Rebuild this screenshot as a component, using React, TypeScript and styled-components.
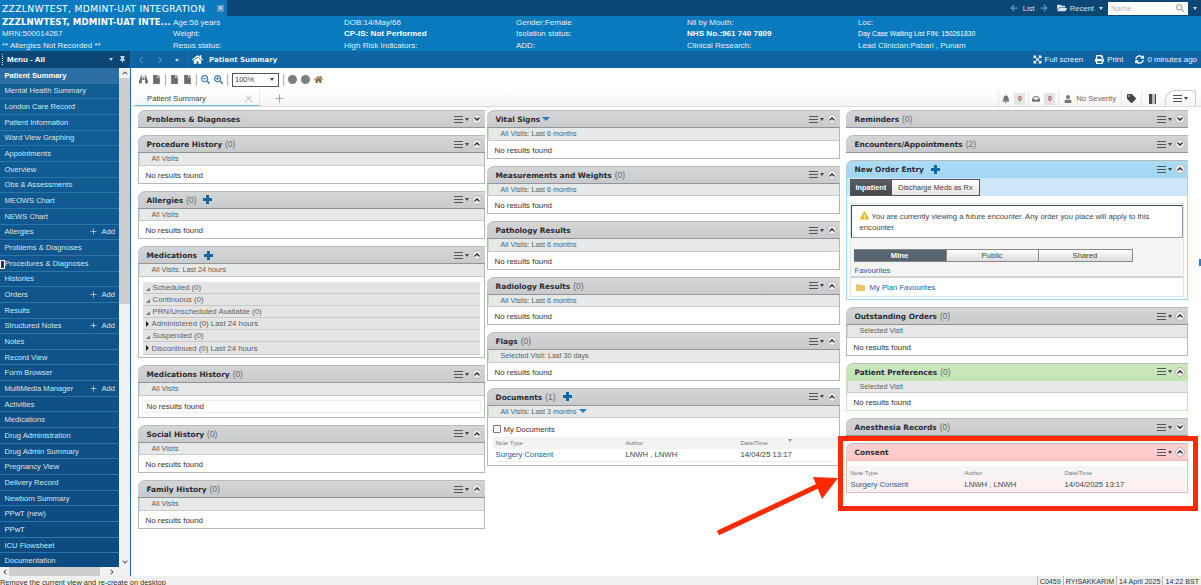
import React from 'react';
import styled, { createGlobalStyle } from 'styled-components';
import { Plus, X } from 'lucide-react';
import {
  FaBell,
  FaBinoculars,
  FaChevronDown,
  FaChevronLeft,
  FaChevronRight,
  FaChevronUp,
  FaFile,
  FaFolder,
  FaFolderOpen,
  FaHome,
  FaInbox,
  FaPrint,
  FaSearch,
  FaSearchMinus,
  FaSearchPlus,
  FaSyncAlt,
  FaTag,
  FaThumbtack,
  FaUser,
  FaExpandArrowsAlt,
  FaArrowLeft,
  FaArrowRight,
  FaExclamationTriangle,
} from 'react-icons/fa';

const FONT = '"Liberation Sans", "Noto Sans", sans-serif';
const HEAD_FONT = '"DejaVu Sans", "Liberation Sans", sans-serif';

const GlobalStyle = createGlobalStyle`
  html, body {
    margin: 0;
    padding: 0;
    height: 585px;
    overflow: hidden;
    background: #fff;
    font-family: ${FONT};
    font-size: 7.7px;
    color: #333;
  }
  * { box-sizing: border-box; }
`;

type Tone = 'grey' | 'blue' | 'green' | 'red';

const toneHeader: Record<Tone, string> = {
  grey: 'linear-gradient(#d3d5d6, #c8cacb)',
  blue: 'linear-gradient(#acdcf6, #a3d6f3)',
  green: 'linear-gradient(#cde8bf, #c3e3b2)',
  red: 'linear-gradient(#ffd0d0, #ffc9c9)',
};
const toneBorder: Record<Tone, string> = {
  grey: '#b5b8ba',
  blue: '#a3d6f3',
  green: '#c9e4ba',
  red: '#e8b9b9',
};

const menuItems: { label: string; add?: boolean }[] = [
  { label: 'Patient Summary' },
  { label: 'Mental Health Summary' },
  { label: 'London Care Record' },
  { label: 'Patient Information' },
  { label: 'Ward View Graphing' },
  { label: 'Appointments' },
  { label: 'Overview' },
  { label: 'Obs & Assessments' },
  { label: 'MEOWS Chart' },
  { label: 'NEWS Chart' },
  { label: 'Allergies', add: true },
  { label: 'Problems & Diagnoses' },
  { label: 'Procedures & Diagnoses' },
  { label: 'Histories' },
  { label: 'Orders', add: true },
  { label: 'Results' },
  { label: 'Structured Notes', add: true },
  { label: 'Notes' },
  { label: 'Record View' },
  { label: 'Form Browser' },
  { label: 'MultiMedia Manager', add: true },
  { label: 'Activities' },
  { label: 'Medications' },
  { label: 'Drug Administration' },
  { label: 'Drug Admin Summary' },
  { label: 'Pregnancy View' },
  { label: 'Delivery Record' },
  { label: 'Newborn Summary' },
  { label: 'PPwT (new)' },
  { label: 'PPwT' },
  { label: 'ICU Flowsheet' },
  { label: 'Documentation' },
];

const Page = styled.div`
  position: relative;
  width: 1201px;
  height: 585px;
  display: flex;
  flex-direction: column;
  overflow: hidden;
`;

const TopBar = styled.div`
  height: 16px;
  flex: none;
  background: #0c4674;
  display: flex;
  align-items: stretch;
  color: #cfe0ee;
`;

const PatientTab = styled.div`
  width: 227px;
  background: #0a7abf;
  color: #fff;
  font-family: ${HEAD_FONT};
  font-size: 9.2px;
  letter-spacing: 0.32px;
  display: flex;
  align-items: center;
  padding: 0 3px 0 2px;
  justify-content: space-between;
  white-space: nowrap;
`;

const TabClose = styled.span`
  width: 7px;
  height: 7px;
  background: #5d93b8;
  color: #fff;
  font-size: 7px;
  line-height: 7px;
  text-align: center;
`;

const TopTools = styled.div`
  margin-left: auto;
  display: flex;
  align-items: center;
  gap: 5px;
  padding-right: 4px;
  svg { color: #5d9cc9; font-size: 8px; }
`;

const RecentIcon = styled(FaFolderOpen)`
  && { color: #d5e3ee; font-size: 10px; }
  margin-left: 4px;
  margin-right: -2px;
`;

const NameBox = styled.div`
  width: 80px;
  height: 13px;
  background: #fff;
  color: #b5b5b5;
  display: flex;
  align-items: center;
  justify-content: space-between;
  padding: 0 4px 0 3px;
  svg { color: #aaa; }
`;

const Caret = styled.span`
  width: 0;
  height: 0;
  border: 2.5px solid transparent;
  border-top: 3px solid currentColor;
  border-bottom: 0;
  display: inline-block;
`;

const DarkCaret = styled(Caret)`
  color: #444;
`;

const Banner = styled.div`
  height: 35px;
  flex: none;
  background: #0a7abf;
  color: #e3eff7;
  display: grid;
  grid-template-columns: 171px 171px 172px 171px 171px 1fr;
  padding: 1px 0 0 2px;
  font-size: 8px;
`;

const BannerCol = styled.div`
  display: flex;
  flex-direction: column;
  white-space: nowrap;
  & > div { height: 11.4px; line-height: 11.4px; }
`;

const BannerName = styled.div`
  font-family: ${HEAD_FONT};
  font-weight: 700;
  color: #fff;
  font-size: 8.6px;
  letter-spacing: 0.1px;
`;

const StrongLine = styled.div`
  color: #fff;
  font-weight: 700;
  font-size: 8.1px;
`;

const SmallLine = styled.div`
  font-size: 6.8px;
  color: #fff;
`;

const Shell = styled.div`
  flex: 1;
  display: flex;
  min-height: 0;
`;

const Side = styled.aside`
  width: 130px;
  flex: none;
  display: flex;
  flex-direction: column;
`;

const MenuHead = styled.div`
  height: 17px;
  flex: none;
  background: #0c4674;
  color: #fff;
  display: flex;
  align-items: center;
  padding: 0 4px 0 7px;
  font-weight: 700;
  font-size: 8px;
  position: relative;
  svg { font-size: 7px; color: #c2d6e6; }
`;

const Grip = styled.span`
  position: absolute;
  left: 2px;
  top: 3px;
  height: 11px;
  border-left: 1.5px dotted #fff;
`;

const MenuTools = styled.div`
  margin-left: auto;
  display: flex;
  align-items: center;
  gap: 6px;
  color: #c2d6e6;
`;

const SideBody = styled.div`
  flex: 1;
  display: flex;
  min-height: 0;
`;

const MenuList = styled.ul`
  list-style: none;
  margin: 0;
  padding: 0;
  width: 119px;
  background: linear-gradient(#115f97, #0d4a80);
`;

const MenuItem = styled.li<{ $active?: boolean; $focus?: boolean }>`
  position: relative;
  height: 15.66px;
  display: flex;
  align-items: center;
  justify-content: space-between;
  padding: 0 4px 0 4.5px;
  color: ${(p) => (p.$active ? '#fff' : '#d6e5f0')};
  font-weight: ${(p) => (p.$active ? 700 : 400)};
  background: ${(p) => (p.$active ? '#2c6ea3' : 'transparent')};
  border-bottom: 1px solid #2a76aa;
  white-space: nowrap;
  font-size: 7.6px;
  ${(p) =>
    p.$focus &&
    `&::before {
      content: '';
      position: absolute;
      left: 0;
      top: 4px;
      width: 3px;
      height: 7px;
      border: 1px solid #fff;
      background: #123c78;
    }`}
`;

const AddLink = styled.span`
  display: flex;
  align-items: center;
  gap: 3px;
  svg { color: #fff; }
`;

const ScrollCol = styled.div`
  width: 11px;
  background: #f1f1f1;
  display: flex;
  flex-direction: column;
  align-items: center;
  color: #555;
  svg { font-size: 6px; }
`;

const ScrollThumb = styled.div`
  width: 100%;
  height: 226px;
  background: #cdcdcd;
`;

const ScrollArrow = styled.span<{ $bottom?: boolean }>`
  height: 10px;
  display: flex;
  align-items: center;
  margin-top: ${(p) => (p.$bottom ? 'auto' : '0')};
`;

const HScroll = styled.div`
  height: 9px;
  flex: none;
  background: #f1f1f1;
  display: flex;
  align-items: center;
  justify-content: space-between;
  padding: 0 15px 0 2px;
  color: #555;
  position: relative;
  svg { font-size: 6px; display: block; }
`;

const HThumb = styled.div`
  position: absolute;
  left: 9px;
  top: 0;
  width: 91px;
  height: 100%;
  background: #cdcdcd;
`;

const Main = styled.main`
  flex: 1;
  min-width: 0;
  display: flex;
  flex-direction: column;
  border-left: 1.5px solid #1a6aa5;
`;

const CrumbBar = styled.div`
  height: 17px;
  flex: none;
  background: #0f64a3;
  color: #e7f0f7;
  display: flex;
  align-items: center;
  padding: 0 4px 0 6px;
  font-size: 7.9px;
`;

const CrumbNav = styled.div`
  display: flex;
  align-items: center;
  gap: 11px;
  color: #4f8dbc;
  width: 51px;
  svg { font-size: 8px; display: block; }
  span:last-child { color: #c5d9e8; }
`;

const CrumbTitle = styled.div`
  display: flex;
  align-items: center;
  gap: 6px;
  font-weight: 700;
  font-family: ${HEAD_FONT};
  font-size: 7px;
  svg { font-size: 11px; color: #fff; }
  padding-left: 3px;
  border-left: 1px solid #1d73b0;
  height: 100%;
`;

const CrumbTools = styled.div`
  margin-left: auto;
  display: flex;
  align-items: center;
  gap: 12px;
  span { display: flex; align-items: center; gap: 3px; }
  svg { font-size: 9px; color: #fff; }
`;

const Toolbar = styled.div`
  height: 23px;
  flex: none;
  display: flex;
  align-items: center;
  gap: 4px;
  padding: 0 0 0 8px;
  background: #fff;
  color: #6d6d6d;
  svg { font-size: 9px; }
`;

const ZoomIcon = styled.span`
  display: flex;
  color: #3f7fb5;
`;

const HomeIcon = styled(FaHome)`
  color: #8a6a3c;
`;

const ZoomSelect = styled.div`
  width: 47px;
  height: 14px;
  border: 1px solid #555;
  color: #444;
  background: #fff;
  display: flex;
  align-items: center;
  justify-content: space-between;
  padding: 0 4px 0 2px;
  font-size: 7.5px;
`;

const Dot = styled.span`
  width: 9px;
  height: 9px;
  border-radius: 50%;
  background: #7e7e7e;
`;

const Sep = styled.span`
  width: 1px;
  height: 12px;
  background: #b0b0b0;
`;

const TabStrip = styled.div`
  height: 16px;
  flex: none;
  display: flex;
  align-items: stretch;
  background: linear-gradient(#fff, #f4f4f4);
  border-bottom: 1px solid #ddd;
  padding-left: 4px;
`;

const ViewTab = styled.div`
  width: 125px;
  display: flex;
  align-items: center;
  justify-content: space-between;
  padding: 0 5px 0 12px;
  border-bottom: 1px solid #6db7e4;
  border-right: 1px solid #e4e4e4;
  color: #444;
  svg { color: #777; }
`;

const NewTab = styled.span`
  color: #666;
  margin-left: 13px;
  display: flex;
  align-items: center;
`;

const StripTools = styled.div`
  margin-left: auto;
  display: flex;
  align-items: center;
  color: #666;
  padding-right: 5px;
  svg { font-size: 8px; color: #777; }
`;

const StripCell = styled.div<{ $pad?: number }>`
  height: 100%;
  display: flex;
  align-items: center;
  gap: 4px;
  padding: 0 ${(p) => p.$pad ?? 3}px;
  border-left: 1px solid #e8e8e8;
`;

const DarkTag = styled(FaTag)`
  && { color: #444; font-size: 9px; }
`;

const Door = styled.span`
  width: 7px;
  height: 10px;
  margin: 0 2px;
  border-left: 3px solid #444;
  border-right: 1px solid #444;
  background: #bbb;
`;

const Badge = styled.span`
  width: 11px;
  height: 12px;
  background: #e4e4e4;
  font-size: 6.6px;
  font-weight: 700;
  text-align: center;
  line-height: 12px;
`;

const ListTab = styled.div`
  width: 31px;
  height: 16px;
  margin-left: 2px;
  align-self: flex-end;
  border: 1px solid #ccc;
  border-bottom: 0;
  border-radius: 10px 3px 0 0;
  display: flex;
  gap: 2px;
  align-items: center;
  justify-content: center;
`;

const Board = styled.div`
  flex: 1;
  display: grid;
  grid-template-columns: 347px 353px 346px;
  column-gap: 2px;
  padding: 3px 0 0 6.5px;
  min-height: 0;
`;

const Column = styled.div<{ $shift?: number }>`
  display: flex;
  flex-direction: column;
  gap: 7px;
  margin-left: ${(p) => p.$shift ?? 0}px;
`;

const PanelBox = styled.section<{ $tone: Tone; $closed: boolean }>`
  border: 1px solid ${(p) => toneBorder[p.$tone]};
  border-top: 0;
  border-bottom-width: ${(p) => (p.$closed ? 0 : 1)}px;
  border-radius: 8px 0 0 0;
  background: #fff;
`;

const PanelHead = styled.header<{ $tone: Tone }>`
  height: 18px;
  margin: 0 -1px;
  background: ${(p) => toneHeader[p.$tone]};
  border-top: 1px solid #b9bcbe;
  border-bottom: 1px solid ${(p) => (p.$tone === 'grey' ? '#8f9599' : toneBorder[p.$tone])};
  border-radius: 8px 0 0 0;
  display: flex;
  align-items: center;
  padding: 0 3px 0 9px;
`;

const PanelTitle = styled.h3`
  margin: 0;
  font-family: ${HEAD_FONT};
  font-size: 7.4px;
  font-weight: 700;
  color: #2b2b33;
  white-space: nowrap;
  small {
    font-family: ${FONT};
    font-size: 8.4px;
    font-weight: 400;
    color: #6b6b6b;
    margin-left: 3px;
  }
`;

const PlusIcon = styled.span`
  position: relative;
  width: 9px;
  height: 9px;
  margin-left: 7px;
  display: inline-block;
  &::before, &::after {
    content: '';
    position: absolute;
    background: #15689f;
  }
  &::before { left: 3px; top: 0; width: 3px; height: 9px; }
  &::after { left: 0; top: 3px; width: 9px; height: 3px; }
`;

const FilterCaret = styled.span`
  display: inline-block;
  margin-left: 2px;
  vertical-align: middle;
  border: 4px solid transparent;
  border-top: 4px solid #2a7cb9;
  border-bottom: 0;
`;

const HeadTools = styled.div`
  margin-left: auto;
  display: flex;
  align-items: center;
  gap: 2px;
`;

const Burger = styled.span`
  width: 9px;
  height: 7px;
  border-top: 1px solid #555;
  border-bottom: 1px solid #555;
  position: relative;
  &::after {
    content: '';
    position: absolute;
    left: 0;
    right: 0;
    top: 2px;
    border-top: 1px solid #555;
  }
`;

const Chevron = styled.span`
  width: 10px;
  height: 10px;
  margin-left: 1px;
  border-radius: 50%;
  background: #e9e9e9;
  border: 1px solid #bbb;
  display: flex;
  align-items: center;
  justify-content: center;
  svg { display: block; }
`;

const SubRow = styled.div`
  height: 12.5px;
  background: #e7e9e8;
  border-left: 1px solid #c4e3ae;
  border-bottom: 1px solid #c8cacb;
  padding-left: 12px;
  display: flex;
  align-items: center;
  color: #5a5f66;
  font-size: 7.2px;
`;

const Empty = styled.div<{ $boxed?: boolean }>`
  height: ${(p) => (p.$boxed ? 13 : 17)}px;
  margin: ${(p) => (p.$boxed ? '4.5px 3px 3.5px' : '0')};
  border: ${(p) => (p.$boxed ? '1px solid #eee' : '0')};
  display: flex;
  align-items: center;
  padding: ${(p) => (p.$boxed ? '0 0 0 4px' : '2px 0 0 7px')};
  color: #333;
  font-size: 7.9px;
`;

const MedList = styled.div`
  padding: 5.5px 4px 2.5px;
`;

const MedRow = styled.div`
  height: 12.1px;
  background: #e4e4e4;
  border-bottom: 1px solid #c8c8c8;
  display: flex;
  align-items: center;
  gap: 3px;
  padding-left: 3px;
  color: #5f5f5f;
  font-size: 7.8px;
`;

const Twist = styled.span<{ $open: boolean }>`
  display: inline-block;
  width: 0;
  height: 0;
  ${(p) =>
    p.$open
      ? 'border-left: 4px solid transparent; border-bottom: 4px solid #777; margin-top: 2px;'
      : 'border-top: 3px solid transparent; border-bottom: 3px solid transparent; border-left: 3px solid #222;'}
`;

const CheckRow = styled.label`
  height: 15px;
  display: flex;
  align-items: center;
  gap: 3px;
  padding-left: 5px;
  color: #333;
  margin-top: 3.5px;
`;

const CheckBox = styled.span`
  width: 8px;
  height: 8px;
  border: 1px solid #777;
  border-radius: 1px;
`;

const NoteGrid = styled.div<{ $a: number; $b: number; $tint?: boolean }>`
  display: grid;
  grid-template-columns: ${(p) => `${p.$a}px ${p.$b}px 1fr`};
  margin: ${(p) => (p.$tint ? '5px 1px 1px' : '0 2px 3px 5px')};
  background: ${(p) => (p.$tint ? '#fdf1f1' : '#fff')};
`;

const NoteHead = styled.div<{ $tint?: boolean }>`
  height: 12px;
  padding: 1px 0 0 3px;
  background: ${(p) => (p.$tint ? '#f5f3f3' : '#f3f3f3')};
  color: #777;
  font-size: 6px;
  display: flex;
  align-items: center;
`;

const SortMark = styled(Caret)`
  color: #999;
  margin: -5px 0 0 20px;
`;

const NoteCell = styled.div`
  height: 13px;
  padding-left: 3px;
  color: #444;
  display: flex;
  align-items: center;
  font-size: 7.7px;
  border-bottom: 1px solid #efefef;
`;

const LinkCell = styled(NoteCell)`
  color: #1f5a9e;
`;

const OrderTabs = styled.div`
  height: 18px;
  display: flex;
  background: #cde6f8;
  padding: 0.5px 0 0 3px;
  align-items: flex-start;
`;

const OrderTab = styled.div<{ $on?: boolean }>`
  height: 17px;
  padding: 0 ${(p) => (p.$on ? 5 : 6)}px;
  display: flex;
  align-items: center;
  font-size: 7.4px;
  background: ${(p) => (p.$on ? 'linear-gradient(#5a5f64, #44494e)' : 'linear-gradient(#fff, #e4e4e4)')};
  color: ${(p) => (p.$on ? '#fff' : '#444')};
  font-weight: ${(p) => (p.$on ? 700 : 400)};
  border: 1px solid #555;
  border-left-width: ${(p) => (p.$on ? 1 : 0)}px;
`;

const OrderBody = styled.div`
  margin: 7px 3px 2px;
  border: 1px solid #cfe7f7;
  display: flex;
  flex-direction: column;
`;

const Notice = styled.div`
  height: 33px;
  margin-top: 1px;
  padding: 5px 8px 0 8px;
  border: 1px solid #9aa0a5;
  border-top-color: #444;
  border-left-color: #444;
  color: #444;
  font-size: 7.7px;
  line-height: 11px;
  svg { color: #e8b923; font-size: 9px; vertical-align: -1px; margin-right: 3px; }
`;

const OrderLower = styled.div`
  background: #f5f5f5;
  padding: 11px 3px 0;
`;

const Segments = styled.div`
  display: grid;
  grid-template-columns: 93px 92px 94px;
  width: 279px;
  height: 13px;
`;

const Segment = styled.div<{ $on?: boolean }>`
  display: flex;
  align-items: center;
  justify-content: center;
  font-weight: ${(p) => (p.$on ? 700 : 400)};
  background: ${(p) => (p.$on ? '#566570' : 'linear-gradient(#fff, #dcdcdc)')};
  color: ${(p) => (p.$on ? '#fff' : '#444')};
  border: 1px solid #888;
  border-left-width: 0;
`;

const FavLabel = styled.div`
  height: 16px;
  display: flex;
  align-items: center;
  padding: 3px 0 0 4px;
  color: #1f5a9e;
  background: #f5f5f5;
  border-bottom: 2px solid #d2d2d2;
`;

const FavRow = styled.div`
  height: 18px;
  display: flex;
  align-items: center;
  gap: 5px;
  padding-left: 5px;
  color: #1f5a9e;
  svg { color: #e9c46a; font-size: 9px; }
`;

const Status = styled.footer`
  height: 9px;
  flex: none;
  background: #f0f0f0;
  display: flex;
  justify-content: space-between;
  color: #333;
  font-size: 7.4px;
  line-height: 13px;
  white-space: nowrap;
  overflow: hidden;
`;

const StatusCells = styled.div`
  display: flex;
  font-size: 7.1px;
  span { padding: 0 2px; border-left: 1px solid #bbb; }
`;

const Highlight = styled.div`
  position: absolute;
  left: 838px;
  top: 436px;
  width: 360px;
  height: 75px;
  border: 5px solid #ff2a00;
  pointer-events: none;
`;

const Arrow = styled.svg`
  position: absolute;
  left: 700px;
  top: 460px;
  width: 150px;
  height: 85px;
  pointer-events: none;
`;

const SplitHandle = styled.span`
  position: absolute;
  right: 0;
  top: 259px;
  width: 2px;
  height: 7px;
  background: #2a7cd0;
`;

const Chev = ({ up }: { up?: boolean }) => (
  <Chevron>
    <svg width="6" height="4" viewBox="0 0 6 4">
      <path d={up ? 'M0.5 3.4 L3 1 L5.5 3.4' : 'M0.5 0.6 L3 3 L5.5 0.6'} stroke="#222" strokeWidth="1.3" fill="none" />
    </svg>
  </Chevron>
);

type PanelProps = {
  title: string;
  count?: number;
  tone?: Tone;
  plus?: boolean;
  sort?: boolean;
  up?: boolean;
  children?: React.ReactNode;
};

function Panel({ title, count, tone = 'grey', plus, sort, up, children }: PanelProps) {
  return (
    <PanelBox $tone={tone} $closed={!children}>
      <PanelHead $tone={tone}>
        <PanelTitle>
          {title}
          {sort && <FilterCaret />}
          {count !== undefined && <small>({count})</small>}
        </PanelTitle>
        {plus && <PlusIcon />}
        <HeadTools>
          <Burger />
          <DarkCaret />
          <Chev up={up} />
        </HeadTools>
      </PanelHead>
      {children}
    </PanelBox>
  );
}

function EmptyPanel(props: PanelProps & { scope: string; boxed?: boolean }) {
  const { scope, boxed, ...rest } = props;
  return (
    <Panel {...rest} up>
      <SubRow>{scope}</SubRow>
      <Empty $boxed={boxed}>No results found</Empty>
    </Panel>
  );
}

const medRows = [
  { label: 'Scheduled (0)', open: true },
  { label: 'Continuous (0)', open: true },
  { label: 'PRN/Unscheduled Available (0)', open: true },
  { label: 'Administered (0) Last 24 hours', open: false },
  { label: 'Suspended (0)', open: true },
  { label: 'Discontinued (0) Last 24 hours', open: false },
];

export default function App() {
  return (
    <Page>
      <GlobalStyle />
      <TopBar>
        <PatientTab>
          ZZZLNWTEST, MDMINT-UAT INTEGRATION
          <TabClose>×</TabClose>
        </PatientTab>
        <TopTools>
          <FaArrowLeft />
          <span>List</span>
          <FaArrowRight />
          <RecentIcon />
          <span>Recent</span>
          <Caret />
          <NameBox>
            Name
            <FaSearch />
          </NameBox>
          <Caret />
        </TopTools>
      </TopBar>

      <Banner>
        <BannerCol>
          <BannerName>ZZZLNWTEST, MDMINT-UAT INTE...</BannerName>
          <div>MRN:500014267</div>
          <div>** Allergies Not Recorded **</div>
        </BannerCol>
        <BannerCol>
          <div>Age:58 years</div>
          <div>Weight:</div>
          <div>Resus status:</div>
        </BannerCol>
        <BannerCol>
          <div>DOB:14/May/66</div>
          <StrongLine>CP-IS: Not Performed</StrongLine>
          <div>High Risk Indicators:</div>
        </BannerCol>
        <BannerCol>
          <div>Gender:Female</div>
          <div>Isolation status:</div>
          <div>ADD:</div>
        </BannerCol>
        <BannerCol>
          <div>Nil by Mouth:</div>
          <StrongLine>NHS No.:961 740 7809</StrongLine>
          <div>Clinical Research:</div>
        </BannerCol>
        <BannerCol>
          <div>Loc:</div>
          <SmallLine>Day Case Waiting List FIN: 150261830</SmallLine>
          <div>Lead Clinician:Pabari , Punam</div>
        </BannerCol>
      </Banner>

      <Shell>
        <Side>
          <MenuHead>
            <Grip />
            Menu - All
            <MenuTools>
              <Caret />
              <FaThumbtack />
            </MenuTools>
          </MenuHead>
          <SideBody>
            <MenuList>
              {menuItems.map((item, i) => (
                <MenuItem key={item.label} $active={i === 0} $focus={item.label === 'Procedures & Diagnoses'}>
                  {item.label}
                  {item.add && (
                    <AddLink>
                      <Plus size={9} strokeWidth={1.5} /> Add
                    </AddLink>
                  )}
                </MenuItem>
              ))}
            </MenuList>
            <ScrollCol>
              <ScrollArrow>
                <FaChevronUp />
              </ScrollArrow>
              <ScrollThumb />
              <ScrollArrow $bottom>
                <FaChevronDown />
              </ScrollArrow>
            </ScrollCol>
          </SideBody>
          <HScroll>
            <HThumb />
            <FaChevronLeft />
            <FaChevronRight />
          </HScroll>
        </Side>

        <Main>
          <CrumbBar>
            <CrumbNav>
              <FaChevronLeft />
              <FaChevronRight />
              <span>
                <Caret />
              </span>
            </CrumbNav>
            <CrumbTitle>
              <FaHome />
              Patient Summary
            </CrumbTitle>
            <CrumbTools>
              <span>
                <FaExpandArrowsAlt />
                Full screen
              </span>
              <span>
                <FaPrint />
                Print
              </span>
              <span>
                <FaSyncAlt />
                0 minutes ago
              </span>
            </CrumbTools>
          </CrumbBar>

          <Toolbar>
            <FaBinoculars />
            <FaFile />
            <Sep />
            <FaFile />
            <FaFile />
            <Sep />
            <ZoomIcon>
              <FaSearchMinus />
            </ZoomIcon>
            <ZoomIcon>
              <FaSearchPlus />
            </ZoomIcon>
            <Sep />
            <ZoomSelect>
              100%
              <Caret />
            </ZoomSelect>
            <Sep />
            <Dot />
            <Dot />
            <HomeIcon />
          </Toolbar>

          <TabStrip>
            <ViewTab>
              Patient Summary
              <X size={11} strokeWidth={1} />
            </ViewTab>
            <NewTab>
              <Plus size={13} strokeWidth={1} />
            </NewTab>
            <StripTools>
              <StripCell>
                <FaBell />
                <Badge>0</Badge>
              </StripCell>
              <StripCell>
                <FaInbox />
                <Badge>0</Badge>
              </StripCell>
              <StripCell $pad={5}>
                <FaUser />
                No Severity
              </StripCell>
              <StripCell $pad={5}>
                <DarkTag />
              </StripCell>
              <StripCell $pad={5}>
                <Door />
              </StripCell>
              <ListTab>
                <Burger />
                <DarkCaret />
              </ListTab>
            </StripTools>
          </TabStrip>

          <Board>
            <Column>
              <Panel title="Problems & Diagnoses" />
              <EmptyPanel title="Procedure History" count={0} scope="All Visits" />
              <EmptyPanel title="Allergies" count={0} plus scope="All Visits" />
              <Panel title="Medications" plus up>
                <SubRow>All Visits: Last 24 hours</SubRow>
                <MedList>
                  {medRows.map((row) => (
                    <MedRow key={row.label}>
                      <Twist $open={row.open} />
                      {row.label}
                    </MedRow>
                  ))}
                </MedList>
              </Panel>
              <EmptyPanel title="Medications History" count={0} scope="All Visits" boxed />
              <EmptyPanel title="Social History" count={0} scope="All Visits" />
              <EmptyPanel title="Family History" count={0} scope="All Visits" />
            </Column>

            <Column>
              <EmptyPanel title="Vital Signs" sort scope="All Visits: Last 6 months" />
              <EmptyPanel title="Measurements and Weights" count={0} scope="All Visits: Last 6 months" />
              <EmptyPanel title="Pathology Results" scope="All Visits: Last 6 months" />
              <EmptyPanel title="Radiology Results" count={0} scope="All Visits: Last 6 months" />
              <EmptyPanel title="Flags" count={0} scope="Selected Visit: Last 30 days" />
              <Panel title="Documents" count={1} plus up>
                <SubRow>
                  All Visits: Last 3 months
                  <FilterCaret />
                </SubRow>
                <CheckRow>
                  <CheckBox />
                  My Documents
                </CheckRow>
                <NoteGrid $a={130} $b={115}>
                  <NoteHead>Note Type</NoteHead>
                  <NoteHead>Author</NoteHead>
                  <NoteHead>
                    Date/Time
                    <SortMark />
                  </NoteHead>
                  <LinkCell>Surgery Consent</LinkCell>
                  <NoteCell>LNWH , LNWH</NoteCell>
                  <NoteCell>14/04/25 13:17</NoteCell>
                </NoteGrid>
              </Panel>
            </Column>

            <Column $shift={4}>
              <Panel title="Reminders" count={0} />
              <Panel title="Encounters/Appointments" count={2} />
              <Panel title="New Order Entry" tone="blue" plus up>
                <OrderTabs>
                  <OrderTab $on>Inpatient</OrderTab>
                  <OrderTab>Discharge Meds as Rx</OrderTab>
                </OrderTabs>
                <OrderBody>
                  <Notice>
                    <FaExclamationTriangle />
                    You are currently viewing a future encounter. Any order you place will apply to this encounter.
                  </Notice>
                  <OrderLower>
                    <Segments>
                      <Segment $on>Mine</Segment>
                      <Segment>Public</Segment>
                      <Segment>Shared</Segment>
                    </Segments>
                  </OrderLower>
                  <FavLabel>Favourites</FavLabel>
                  <FavRow>
                    <FaFolder />
                    My Plan Favourites
                  </FavRow>
                </OrderBody>
              </Panel>
              <EmptyPanel title="Outstanding Orders" count={0} scope="Selected Visit" />
              <EmptyPanel title="Patient Preferences" count={0} tone="green" scope="Selected Visit" />
              <Panel title="Anesthesia Records" count={0} />
              <Panel title="Consent" tone="red" up>
                <NoteGrid $a={114} $b={100} $tint>
                  <NoteHead $tint>Note Type</NoteHead>
                  <NoteHead $tint>Author</NoteHead>
                  <NoteHead $tint>Date/Time</NoteHead>
                  <LinkCell>Surgery Consent</LinkCell>
                  <NoteCell>LNWH , LNWH</NoteCell>
                  <NoteCell>14/04/2025 13:17</NoteCell>
                </NoteGrid>
              </Panel>
            </Column>
          </Board>
        </Main>
      </Shell>

      <Status>
        <span>Remove the current view and re-create on desktop</span>
        <StatusCells>
          <span>C0459</span>
          <span>RYISAKKARIM</span>
          <span>14 April 2025</span>
          <span>14:22 BST</span>
        </StatusCells>
      </Status>

      <SplitHandle />
      <Highlight />
      <Arrow viewBox="0 0 150 85">
        <path d="M18 73 L122 24" stroke="#ff2a00" strokeWidth="5" fill="none" />
        <path d="M138 18 L113 17 L122 39 Z" fill="#ff2a00" />
      </Arrow>
    </Page>
  );
}
